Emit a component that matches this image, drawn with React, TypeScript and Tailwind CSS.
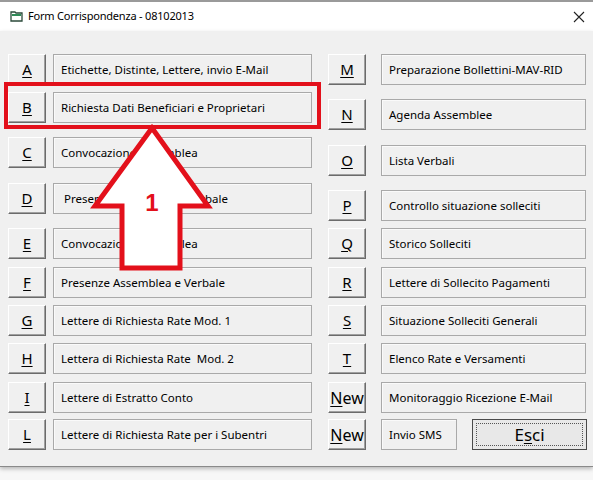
const leftRows = [
  { key: "A", label: "Etichette, Distinte, Lettere, invio E-Mail", mt: "mt-0" },
  { key: "B", label: "Richiesta Dati Beneficiari e Proprietari", mt: "mt-[7px]" },
  { key: "C", label: "Convocazione Assemblea", mt: "mt-[14px]" },
  { key: "D", label: "\u00a0Presenze Assemblea e Verbale", mt: "mt-[15px]" },
  { key: "E", label: "Convocazione Assemblea", mt: "mt-[14px]" },
  { key: "F", label: "Presenze Assemblea e Verbale", mt: "mt-[8px]" },
  { key: "G", label: "Lettere di Richiesta Rate Mod. 1", mt: "mt-[7px]" },
  { key: "H", label: "Lettera di Richiesta Rate\u00a0 Mod. 2", mt: "mt-[7px]" },
  { key: "I", label: "Lettere di Estratto Conto", mt: "mt-[8px]" },
  { key: "L", label: "Lettere di Richiesta Rate per i Subentri", mt: "mt-[6px]" },
];

const rightRows = [
  { key: "M", label: "Preparazione Bollettini-MAV-RID", mt: "mt-0" },
  { key: "N", label: "Agenda Assemblee", mt: "mt-[14px]" },
  { key: "O", label: "Lista Verbali", mt: "mt-[15px]" },
  { key: "P", label: "Controllo situazione solleciti", mt: "mt-[14px]" },
  { key: "Q", label: "Storico Solleciti", mt: "mt-[7px]" },
  { key: "R", label: "Lettere di Sollecito Pagamenti", mt: "mt-[8px]" },
  { key: "S", label: "Situazione Solleciti Generali", mt: "mt-[7px]" },
  { key: "T", label: "Elenco Rate e Versamenti", mt: "mt-[7px]" },
  { key: "New", label: "Monitoraggio Ricezione E-Mail", mt: "mt-[8px]" },
];

const font = "font-['Noto_Sans','Liberation_Sans',sans-serif]";

const KeyButton = ({ k }: { k: string }) => {
  return (
    <div className="flex h-[31px] w-[38px] shrink-0 items-center justify-center border border-t-white border-l-white border-r-[#6b6b6b] border-b-[#6b6b6b] bg-[#f0f0f0] shadow-[inset_-1px_-1px_0_#a0a0a0]">
      {k === "New" ? (
        <span className="text-[16px] leading-none text-black">
          <span className="underline underline-offset-2">N</span>ew
        </span>
      ) : (
        <span className="text-[15px] leading-none text-black underline underline-offset-2">{k}</span>
      )}
    </div>
  );
};

const LabelBox = ({ label, width }: { label: string; width: string }) => {
  return (
    <div className={`${width} flex h-[31px] items-center border border-[#a9a9a9] bg-[#f0f0f0] pl-[7px] shadow-[inset_1px_1px_0_#fafafa]`}>
      <span className="whitespace-pre text-[11.5px] text-black">{label}</span>
    </div>
  );
};

const Arrow = () => {
  return (
    <svg className="absolute left-[88px] top-[122px]" width="128" height="152" viewBox="88 122 128 152">
      <polygon
        points="152,128 95,206 122,206 122,268 180,268 180,206 208,206"
        fill="#ffffff"
        stroke="#e3101b"
        strokeWidth="5"
        strokeLinejoin="miter"
      />
      <text x="152" y="211" textAnchor="middle" fontSize="24" fontWeight="bold" fill="#e3101b" fontFamily="Liberation Sans, Arial, sans-serif">
        1
      </text>
    </svg>
  );
};

const App = () => {
  return (
    <div className={`${font} relative h-[480px] w-[593px] overflow-hidden bg-[#f7f7f7]`}>
      <div className="h-[2px] bg-[#9a9a9a]" />
      <div className="flex h-[29px] items-center bg-white pl-[10px] pr-[8px]">
        <svg width="13" height="11" viewBox="0 0 13 11" className="mr-[5px]">
          <path d="M1 1h4l1 1h6v8H1z" fill="none" stroke="#2b4a3a" strokeWidth="1.3" />
          <path d="M2 3h9v2H2z" fill="#2e8b57" />
        </svg>
        <span className="text-[11px] tracking-[-0.2px] text-black">Form Corrispondenza - 08102013</span>
        <svg width="12" height="12" viewBox="0 0 12 12" className="ml-auto">
          <path d="M1 1l10 10M11 1L1 11" stroke="#222" strokeWidth="1.1" />
        </svg>
      </div>
      <div className="h-[436px] border-b border-[#8a8a8a] bg-[#f0f0f0] pt-[23px] shadow-[0_2px_4px_rgba(0,0,0,0.25)]">
        <div className="flex">
          <div className="ml-[8px] flex flex-col">
            {leftRows.map((r) => (
              <div key={r.key} className={`${r.mt} flex items-center gap-[7px]`}>
                <KeyButton k={r.key} />
                <LabelBox label={r.label} width="w-[259px]" />
              </div>
            ))}
          </div>
          <div className="ml-[16px] flex flex-col">
            {rightRows.map((r) => (
              <div key={r.label} className={`${r.mt} flex items-center gap-[15px]`}>
                <KeyButton k={r.key} />
                <LabelBox label={r.label} width="w-[205px]" />
              </div>
            ))}
            <div className="mt-[6px] flex items-center gap-[15px]">
              <KeyButton k="New" />
              <LabelBox label="Invio SMS" width="w-[76px]" />
              <div className="flex h-[31px] w-[115px] items-center justify-center border border-[#4a4a4a] bg-[#e8e8e8] p-[3px]">
                <div className="flex h-full w-full items-center justify-center border border-dotted border-[#555]">
                  <span className="text-[17px] leading-none text-black">
                    E<span className="underline underline-offset-2">s</span>ci
                  </span>
                </div>
              </div>
            </div>
          </div>
        </div>
      </div>
      <div className="pointer-events-none absolute left-[4px] top-[82px] h-[47px] w-[317px] border-[4px] border-[#e3101b]" />
      <Arrow />
    </div>
  );
};

export default App;
